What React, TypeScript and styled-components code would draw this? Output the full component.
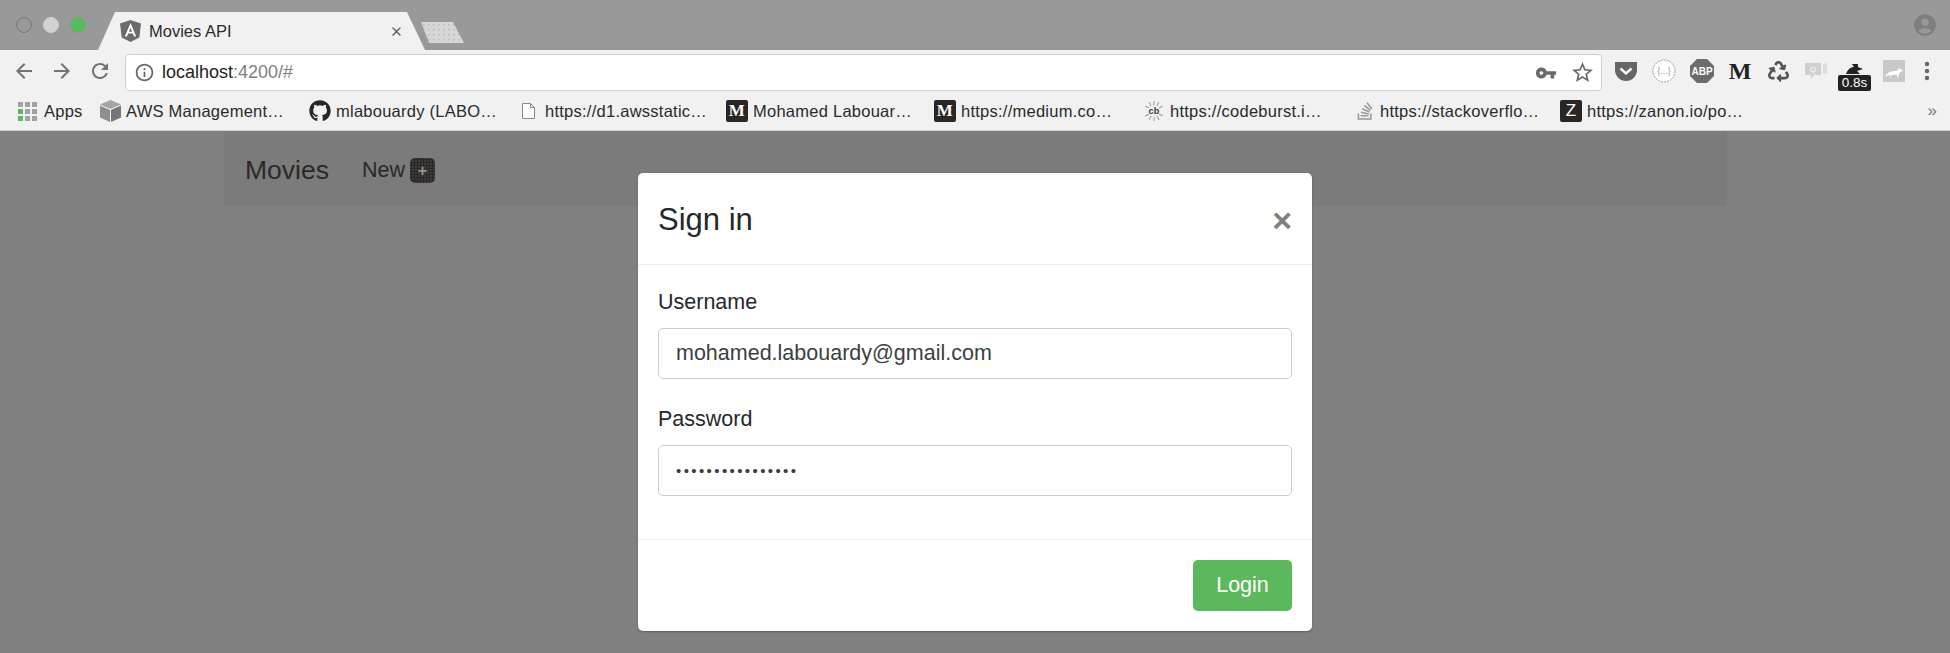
import React from "react";
import styled, { createGlobalStyle } from "styled-components";
import { FaGithub, FaStackOverflow, FaRecycle } from "react-icons/fa";
import { MdAccountCircle, MdVpnKey, MdStarBorder, MdInfoOutline, MdArrowBack, MdArrowForward, MdRefresh, MdClose } from "react-icons/md";

const GlobalStyle = createGlobalStyle`
  html, body {
    margin: 0;
    padding: 0;
    background: #808080;
    font-family: "Liberation Sans", Arial, sans-serif;
  }
`;

const Screen = styled.div`
  position: relative;
  width: 1950px;
  height: 653px;
  overflow: hidden;
  display: flex;
  flex-direction: column;
`;

// 标签栏
const TabStrip = styled.div`
  height: 50px;
  flex: none;
  background: #999999;
  display: flex;
  align-items: flex-end;
  padding-left: 16px;
  padding-right: 12px;
`;
const Lights = styled.div`
  display: flex;
  gap: 11px;
  align-self: flex-start;
  margin-top: 17px;
  width: 82px;
  flex: none;
`;
const Light = styled.span<{ $color: string; $line?: string }>`
  width: 16px;
  height: 16px;
  border-radius: 50%;
  box-sizing: border-box;
  background: ${p => p.$color};
  border: 1px solid ${p => p.$line || p.$color};
`;
const Tab = styled.div`
  width: 327px;
  height: 38px;
  flex: none;
  box-sizing: border-box;
  background: #f1f1f1;
  clip-path: polygon(0 100%, 17px 0, 309px 0, 100% 100%);
  display: flex;
  align-items: center;
  padding: 0 21px 0 22px;
`;
const TabTitle = styled.span`
  flex: 1;
  margin-left: 8px;
  font-size: 16.5px;
  color: #2b2b2b;
`;
const TabClose = styled(MdClose)`
  font-size: 15px;
  color: #555;
`;
const NewTab = styled.div`
  width: 43px;
  height: 21px;
  flex: none;
  margin: 0 0 7px -4px;
  background: radial-gradient(#c0c0c0 1px, #d6d6d6 1px) 0 0 / 5px 5px;
  clip-path: polygon(0 0, 32px 0, 100% 100%, 8px 100%);
`;
const StripSpacer = styled.div`
  flex: 1;
`;
const Account = styled(MdAccountCircle)`
  font-size: 26px;
  color: #7e7e7e;
  align-self: flex-start;
  margin-top: 12px;
`;

// 地址栏
const Toolbar = styled.div`
  height: 42px;
  flex: none;
  background: #f1f1f1;
  display: flex;
  align-items: center;
  padding-left: 12px;
  box-sizing: border-box;
`;
const NavButton = styled.span`
  width: 38px;
  flex: none;
  display: flex;
  align-items: center;
  color: #727272;
  font-size: 24px;
`;
const Omnibox = styled.div`
  width: 1477px;
  height: 37px;
  flex: none;
  margin-left: -1px;
  margin-top: 3px;
  box-sizing: border-box;
  background: #fff;
  border: 1px solid #cfcfcf;
  border-radius: 4px;
  display: flex;
  align-items: center;
  padding: 0 6px 0 8px;
`;
const Url = styled.span`
  flex: 1;
  margin-left: 7px;
  font-size: 18px;
  color: #222;
`;
const UrlRest = styled.span`
  color: #808080;
`;
const OmniIcons = styled.div`
  display: flex;
  align-items: center;
  gap: 13px;
  color: #6a6a6a;
`;
const Extensions = styled.div`
  display: flex;
  align-items: center;
  margin-left: 5px;
`;
const Ext = styled.span<{ $w?: number }>`
  position: relative;
  width: ${p => p.$w || 38}px;
  height: 36px;
  flex: none;
  display: flex;
  align-items: center;
  justify-content: center;
`;
const MediumMark = styled.span`
  font-family: "Liberation Serif", serif;
  font-weight: 700;
  font-size: 24px;
  color: #222;
`;
const TurtleSlot = styled.span`
  position: absolute;
  left: 11px;
  top: 11px;
  line-height: 0;
`;
const Timing = styled.span`
  position: absolute;
  left: 3px;
  top: 22px;
  width: 33px;
  height: 16px;
  background: #222;
  border-radius: 2px;
  color: #fff;
  font-size: 13.5px;
  line-height: 16px;
  text-align: center;
`;

// 书签栏
const Bookmarks = styled.div`
  height: 39px;
  flex: none;
  box-sizing: border-box;
  background: #f1f1f1;
  border-bottom: 1px solid #d0d0d0;
  display: flex;
  align-items: center;
  padding-left: 18px;
  position: relative;
`;
const Bookmark = styled.div<{ $w: number }>`
  width: ${p => p.$w}px;
  flex: none;
  display: flex;
  align-items: center;
  gap: 5px;
  font-size: 16.5px;
  letter-spacing: 0.25px;
  color: #2a2a2a;
  white-space: nowrap;
`;
const AppsGrid = styled.span`
  display: grid;
  grid-template-columns: repeat(3, 5px);
  grid-auto-rows: 5px;
  gap: 2px;
  margin-right: 2px;
`;
const AppsDot = styled.span<{ $green?: boolean }>`
  background: ${p => (p.$green ? "#5cb85c" : "#a3a3a3")};
`;
const BlackFav = styled.span`
  width: 22px;
  height: 22px;
  flex: none;
  background: #2a2626;
  border-radius: 2px;
  color: #fff;
  font-size: 17px;
  line-height: 22px;
  text-align: center;
`;
const SerifFav = styled(BlackFav)`
  font-family: "Liberation Serif", serif;
  font-weight: 700;
`;
const DocLabel = styled.span`
  margin-left: 5px;
`;
const More = styled.span`
  margin-left: auto;
  margin-right: 13px;
  font-size: 17px;
  color: #777;
`;

// 页面
const Page = styled.div`
  flex: 1;
  background: #808080;
`;
const Navbar = styled.nav`
  width: 1503px;
  height: 75px;
  margin-left: 224px;
  background: #7b7b7b;
  display: flex;
  align-items: center;
  padding: 3px 0 0 21px;
  box-sizing: border-box;
  color: #2d2828;
`;
const Brand = styled.span`
  font-size: 26.5px;
  margin-right: 33px;
`;
const NavLink = styled.span`
  font-size: 21.5px;
  margin-right: 5px;
`;
const PlusBadge = styled.span`
  width: 25px;
  height: 25px;
  border-radius: 5px;
  background: radial-gradient(#2d2828 1.2px, #3f3b3b 1.2px) 0 0 / 3px 3px;
  color: #8f8f8f;
  font-size: 17px;
  font-weight: 700;
  line-height: 25px;
  text-align: center;
`;

// 弹窗
const Modal = styled.div`
  position: absolute;
  left: 638px;
  top: 173px;
  width: 674px;
  height: 458px;
  background: #fff;
  border-radius: 5px;
  box-shadow: 0 1px 2px rgba(0, 0, 0, 0.3);
  display: flex;
  flex-direction: column;
`;
const ModalHeader = styled.div`
  height: 92px;
  flex: none;
  box-sizing: border-box;
  border-bottom: 1px solid #ededed;
  display: flex;
  align-items: center;
  justify-content: space-between;
  padding: 2px 20px 0;
`;
const ModalTitle = styled.h4`
  margin: 0;
  font-size: 31px;
  font-weight: 400;
  color: #25282b;
`;
const Dismiss = styled.span`
  color: #7f7f7f;
  font-size: 34px;
  font-weight: 700;
  line-height: 1;
`;
const ModalBody = styled.div`
  flex: 1;
  box-sizing: border-box;
  padding: 23px 20px 0;
  display: flex;
  flex-direction: column;
`;
const FieldLabel = styled.label`
  font-size: 21.5px;
  line-height: 28px;
  color: #25282b;
  margin-bottom: 12px;
`;
const Field = styled.div`
  height: 51px;
  flex: none;
  box-sizing: border-box;
  border: 1px solid #ccc;
  border-radius: 5px;
  padding: 0 17px;
  display: flex;
  align-items: center;
  font-size: 21.5px;
  color: #3c3f41;
  margin-bottom: 26px;
`;
const Dots = styled(Field)`
  font-size: 15px;
  letter-spacing: 2.4px;
  color: #3c3c3c;
`;
const ModalFooter = styled.div`
  height: 92px;
  flex: none;
  box-sizing: border-box;
  border-top: 1px solid #ededed;
  display: flex;
  align-items: center;
  justify-content: flex-end;
  padding: 0 20px;
`;
const LoginButton = styled.button`
  width: 99px;
  height: 51px;
  border: 0;
  border-radius: 5px;
  background: #5cb85c;
  color: #fff;
  font-family: inherit;
  font-size: 21.5px;
`;

const AngularIcon = () => (
  <svg width="21" height="22" viewBox="0 0 21 22">
    <path d="M10.5 0 L21 3.6 L19.3 17.5 L10.5 22 L1.7 17.5 L0 3.6 Z" fill="#6b6b6b" />
    <path d="M10.5 3 L4.8 16.5 H7 L8.1 13.6 H12.9 L14 16.5 H16.2 Z M9 11.7 L10.5 7.8 L12 11.7 Z" fill="#fff" />
  </svg>
);

const PocketIcon = () => (
  <svg width="22" height="20" viewBox="0 0 22 20">
    <path d="M0 1 H22 V9 A11 11 0 0 1 0 9 Z" fill="#666" />
    <path d="M5.5 7.5 L11 12.5 L16.5 7.5" fill="none" stroke="#fff" strokeWidth="2.4" />
  </svg>
);

const BracesIcon = () => (
  <svg width="24" height="24" viewBox="0 0 24 24">
    <circle cx="12" cy="12" r="11" fill="#fff" stroke="#999" strokeDasharray="2 1" />
    <text x="12" y="15" textAnchor="middle" fontSize="9" fill="#999" fontFamily="Liberation Sans">{"{...}"}</text>
  </svg>
);

const AbpIcon = () => (
  <svg width="24" height="24" viewBox="0 0 24 24">
    <path d="M7 0 H17 L24 7 V17 L17 24 H7 L0 17 V7 Z" fill="#6b6b6b" />
    <text x="12" y="16" textAnchor="middle" fontSize="10" fontWeight="700" fill="#fff" fontFamily="Liberation Sans">ABP</text>
  </svg>
);

const ChatIcon = () => (
  <svg width="22" height="18" viewBox="0 0 22 18">
    <path d="M0 1 H16 V13 H9 L6 17 V13 H0 Z" fill="#cfcfcf" />
    <path d="M18 2 L22 1 V12 L18 11 Z" fill="#dcdcdc" />
    <text x="8" y="10" textAnchor="middle" fontSize="8" fill="#fff" fontFamily="Liberation Sans">Q</text>
  </svg>
);

const TurtleIcon = () => (
  <svg width="17" height="10" viewBox="0 0 17 10">
    <path d="M0 10 C2 4 6 3 8 3 L6 0 L12 0 L12 3 L17 5 L11 7 L14 10 Z" fill="#222" />
  </svg>
);

const FoxIcon = () => (
  <svg width="22" height="22" viewBox="0 0 22 22">
    <rect width="22" height="22" fill="#c9c9c9" />
    <path d="M2 17 C5 12 7 12 9 11.5 L15 10.5 L16 7.5 L17.5 9.5 L20 10 L16 13.5 L15 18 L13.5 14.5 L9 15 L7 18 L7.5 14.5 Z" fill="#fff" />
  </svg>
);

const CubeIcon = () => (
  <svg width="21" height="22" viewBox="0 0 21 22">
    <path d="M10.5 0 L21 4.5 L10.5 9 L0 4.5 Z" fill="#a5a5a5" />
    <path d="M0 5.5 L10 10 V22 L0 17.5 Z" fill="#8e8e8e" />
    <path d="M21 5.5 L11 10 V22 L21 17.5 Z" fill="#757575" />
  </svg>
);

const DocIcon = () => (
  <svg width="13" height="16" viewBox="0 0 13 16">
    <path d="M0.5 0.5 H8.5 L12.5 4.5 V15.5 H0.5 Z M8.5 0.5 V4.5 H12.5" fill="#fff" stroke="#888" />
  </svg>
);

const rayAngles = [0, 30, 60, 120, 150, 180, 210, 240, 300, 330];

const CodeburstIcon = () => (
  <svg width="22" height="22" viewBox="0 0 22 22">
    {rayAngles.map(a => (
      <line key={a} x1="11" y1="1" x2="11" y2="5" stroke="#999" strokeWidth="1" transform={`rotate(${a} 11 11)`} />
    ))}
    <text x="11" y="14" textAnchor="middle" fontSize="9" fontWeight="700" fill="#333" fontFamily="Liberation Sans">cb</text>
  </svg>
);

const Kebab = () => (
  <svg width="6" height="20" viewBox="0 0 6 20">
    <circle cx="3" cy="3" r="2.2" fill="#666" />
    <circle cx="3" cy="10" r="2.2" fill="#666" />
    <circle cx="3" cy="17" r="2.2" fill="#666" />
  </svg>
);

const greenDots = [3, 6];

export default function App() {
  return (
    <Screen>
      <GlobalStyle />
      <TabStrip>
        <Lights>
          <Light $color="transparent" $line="#777" />
          <Light $color="#d2d2d2" />
          <Light $color="#5cb85c" />
        </Lights>
        <Tab>
          <AngularIcon />
          <TabTitle>Movies API</TabTitle>
          <TabClose />
        </Tab>
        <NewTab />
        <StripSpacer />
        <Account />
      </TabStrip>

      <Toolbar>
        <NavButton><MdArrowBack /></NavButton>
        <NavButton><MdArrowForward /></NavButton>
        <NavButton><MdRefresh /></NavButton>
        <Omnibox>
          <MdInfoOutline size={21} color="#666" />
          <Url>localhost<UrlRest>:4200/#</UrlRest></Url>
          <OmniIcons>
            <MdVpnKey size={22} />
            <MdStarBorder size={25} />
          </OmniIcons>
        </Omnibox>
        <Extensions>
          <Ext><PocketIcon /></Ext>
          <Ext><BracesIcon /></Ext>
          <Ext><AbpIcon /></Ext>
          <Ext><MediumMark>M</MediumMark></Ext>
          <Ext><FaRecycle size={21} color="#555" /></Ext>
          <Ext><ChatIcon /></Ext>
          <Ext $w={40}>
            <TurtleSlot><TurtleIcon /></TurtleSlot>
            <Timing>0.8s</Timing>
          </Ext>
          <Ext><FoxIcon /></Ext>
          <Ext $w={28}><Kebab /></Ext>
        </Extensions>
      </Toolbar>

      <Bookmarks>
        <Bookmark $w={82}>
          <AppsGrid>
            {Array.from({ length: 9 }).map((_, i) => (
              <AppsDot key={i} $green={greenDots.includes(i)} />
            ))}
          </AppsGrid>
          Apps
        </Bookmark>
        <Bookmark $w={209}><CubeIcon />AWS Management…</Bookmark>
        <Bookmark $w={213}><FaGithub size={22} color="#2a2626" />mlabouardy (LABO…</Bookmark>
        <Bookmark $w={204}><DocIcon /><DocLabel>https://d1.awsstatic…</DocLabel></Bookmark>
        <Bookmark $w={208}><SerifFav>M</SerifFav>Mohamed Labouar…</Bookmark>
        <Bookmark $w={209}><SerifFav>M</SerifFav>https://medium.co…</Bookmark>
        <Bookmark $w={212}><CodeburstIcon />https://codeburst.i…</Bookmark>
        <Bookmark $w={205}><FaStackOverflow size={20} color="#999" />https://stackoverflo…</Bookmark>
        <Bookmark $w={200}><BlackFav>Z</BlackFav>https://zanon.io/po…</Bookmark>
        <More>»</More>
      </Bookmarks>

      <Page>
        <Navbar>
          <Brand>Movies</Brand>
          <NavLink>New</NavLink>
          <PlusBadge>+</PlusBadge>
        </Navbar>
      </Page>

      <Modal>
        <ModalHeader>
          <ModalTitle>Sign in</ModalTitle>
          <Dismiss>×</Dismiss>
        </ModalHeader>
        <ModalBody>
          <FieldLabel>Username</FieldLabel>
          <Field>mohamed.labouardy@gmail.com</Field>
          <FieldLabel>Password</FieldLabel>
          <Dots>••••••••••••••••</Dots>
        </ModalBody>
        <ModalFooter>
          <LoginButton>Login</LoginButton>
        </ModalFooter>
      </Modal>
    </Screen>
  );
}
